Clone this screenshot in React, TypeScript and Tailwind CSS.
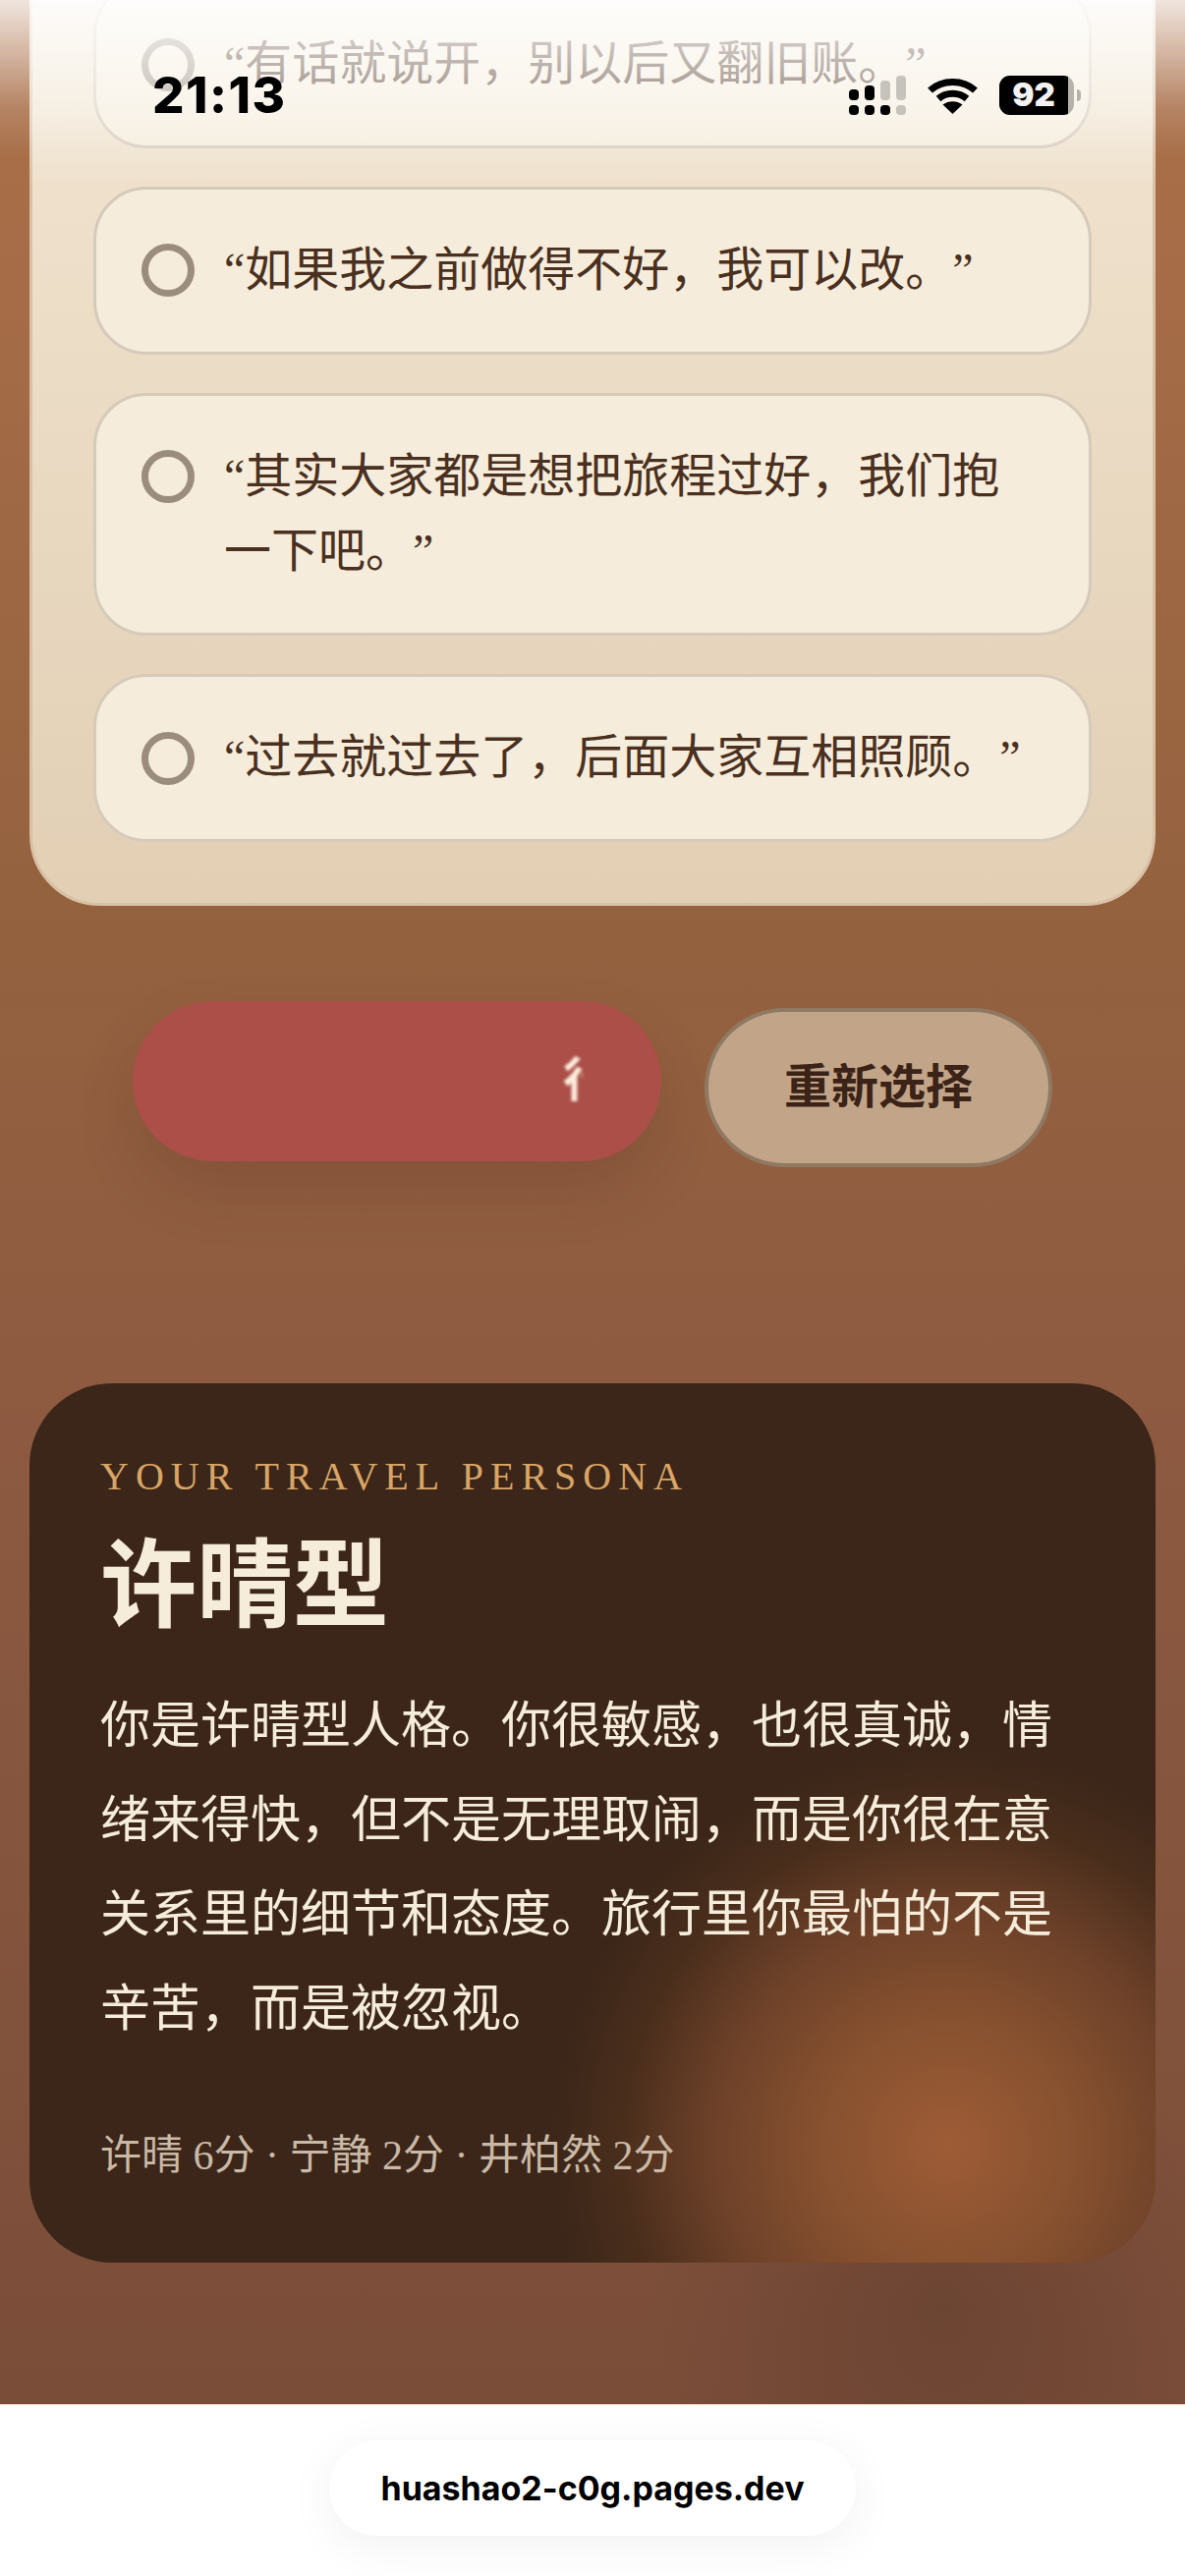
import React from 'react';

const options = [
  '“有话就说开，别以后又翻旧账。”',
  '“如果我之前做得不好，我可以改。”',
  '“其实大家都是想把旅程过好，我们抱一下吧。”',
  '“过去就过去了，后面大家互相照顾。”',
];

function OptionRow({ text }: { text: string }) {
  return (
    <div className="flex items-start gap-[30px] rounded-[54px] border-[3px] border-[#d6cabb] bg-[#f5ecdb] py-[44px] pr-[45px] pl-[46px]">
      <span className="mt-[11.5px] h-[54px] w-[54px] flex-none rounded-full border-[7px] border-[#9b8d7e]" />
      <p className="text-[48px] leading-[76.8px] text-[#4a3020]">{text}</p>
    </div>
  );
}

function StatusBar() {
  return (
    <div className="absolute top-0 left-0 h-[190px] w-full bg-[linear-gradient(to_bottom,rgba(255,255,255,0.82)_0,rgba(255,255,255,0.45)_60px,rgba(255,255,255,0.15)_110px,rgba(255,255,255,0)_160px)]">
      <div className="absolute top-0 right-[30px] left-[30px] h-[190px] bg-[linear-gradient(to_bottom,rgba(255,255,255,0.4)_0,rgba(255,255,255,0.35)_110px,rgba(255,255,255,0)_190px)]" />
      <div className="relative flex items-start justify-between pt-[77px] pr-[106px] pl-[155px]">
        <span className="font-['Inter',sans-serif] text-[51px] leading-[40px] font-extrabold tracking-[1.5px] text-black">21:13</span>
        <div className="flex items-start">
          <svg width="58" height="40" viewBox="0 0 58 40">
            <rect x="0" y="30" width="10" height="10" rx="4" fill="#000" />
            <rect x="16" y="30" width="10" height="10" rx="4" fill="#000" />
            <rect x="32" y="30" width="10" height="10" rx="4" fill="#000" />
            <rect x="48" y="30" width="10" height="10" rx="4" fill="#c6c3bd" />
            <rect x="0" y="14" width="10" height="11" rx="4" fill="#000" />
            <rect x="16" y="10" width="10" height="15" rx="4" fill="#000" />
            <rect x="32" y="5" width="10" height="20" rx="4" fill="#c6c3bd" />
            <rect x="48" y="0" width="10" height="25" rx="4" fill="#c6c3bd" />
          </svg>
          <svg className="mt-[2px] ml-[22px]" width="51" height="37" viewBox="0 0 51 37" fill="none">
            <path d="M2.5 13C15 1.5 36 1.5 48.5 13" stroke="#000" strokeWidth="7" />
            <path d="M11 21.5C19 14.5 32 14.5 40 21.5" stroke="#000" strokeWidth="7" />
            <path d="M25.5 37L15.5 27.5C21 23 30 23 35.5 27.5Z" fill="#000" />
          </svg>
          <div className="ml-[22px] flex items-center">
            <div className="flex h-[40px] w-[76px] overflow-hidden rounded-[11px] bg-[#b5b2ac]">
              <div className="flex h-full w-[70px] items-center justify-center bg-black font-['Inter',sans-serif] text-[33px] font-black text-[#f2f2f2]">
                92
              </div>
            </div>
            <span className="ml-[3px] h-[12px] w-[4px] rounded-r-full bg-[#b5b2ac]" />
          </div>
        </div>
      </div>
    </div>
  );
}

export default function App() {
  return (
    <div className="relative flex h-[2622px] w-[1206px] flex-col overflow-hidden bg-white font-['Liberation_Serif','Noto_Sans_CJK_SC',serif] [text-spacing-trim:space-all]">
      <main className="h-[2447px] flex-none bg-[radial-gradient(circle_at_960px_2345px,rgba(45,30,20,0.2),rgba(45,30,20,0)_300px),linear-gradient(to_bottom,#ab7049_0,#a56c47_300px,#95623f_900px,#8e5b41_1400px,#7a4d39_2447px)] px-[30px]">
        <section className="mt-[-85px] flex flex-col gap-[39px] rounded-[72px] border-[3px] border-[#d9c1a6] bg-[linear-gradient(to_bottom,#f3e7d4,#e2cfb4)] px-[62px] py-[62px]">
          {options.map((text) => (
            <OptionRow key={text} text={text} />
          ))}
        </section>

        <div className="mt-[97px] flex items-start gap-[44px] pl-[105px]">
          <button className="flex h-[163px] w-[538px] items-center justify-end rounded-full bg-[#ab4f48] pr-[80px] shadow-[0_30px_60px_rgba(70,30,20,0.16)]">
            <span className="h-[50px] w-[20px] overflow-hidden text-[48px] leading-[50px] font-bold text-[#fdeedd] blur-[1.5px]">行</span>
          </button>
          <button className="mt-[7px] h-[162px] w-[354px] rounded-full border-[4px] border-[#8f7963] bg-[#c2a588] text-[48px] font-bold text-[#3b2417]">
            重新选择
          </button>
        </div>

        <section className="mt-[220px] rounded-[84px] bg-[#3b2619] bg-[radial-gradient(circle_at_935px_776px,#9e5c36_0,#87512f_130px,#6d4129_240px,#4a2e1c_330px,#3b2619_405px)] bg-no-repeat px-[72px] pt-[71px] pb-[77px]">
          <p className="text-[40px] leading-[47px] tracking-[0.175em] text-[#d9a566]">YOUR TRAVEL PERSONA</p>
          <h2 className="mt-[32px] text-[98px] leading-[115px] font-bold text-[#f5ecda]">许晴型</h2>
          <p className="mt-[36px] text-[51px] leading-[96px] text-[#f5ecda]">
            你是许晴型人格。你很敏感，也很真诚，情绪来得快，但不是无理取闹，而是你很在意关系里的细节和态度。旅行里你最怕的不是辛苦，而是被忽视。
          </p>
          <p className="mt-[70px] text-[42px] leading-[63px] text-[#c9b9a6]">许晴 6分 · 宁静 2分 · 井柏然 2分</p>
        </section>
      </main>

      <footer className="flex flex-1 items-center justify-center border-t border-[#f0d9c4] bg-white pb-[6px]">
        <div className="flex h-[97px] w-[536px] items-center justify-center rounded-full bg-white font-['Inter',sans-serif] text-[34px] font-bold text-black shadow-[0_10px_50px_rgba(0,0,0,0.06)]">
          huashao2-c0g.pages.dev
        </div>
      </footer>

      <StatusBar />
    </div>
  );
}
